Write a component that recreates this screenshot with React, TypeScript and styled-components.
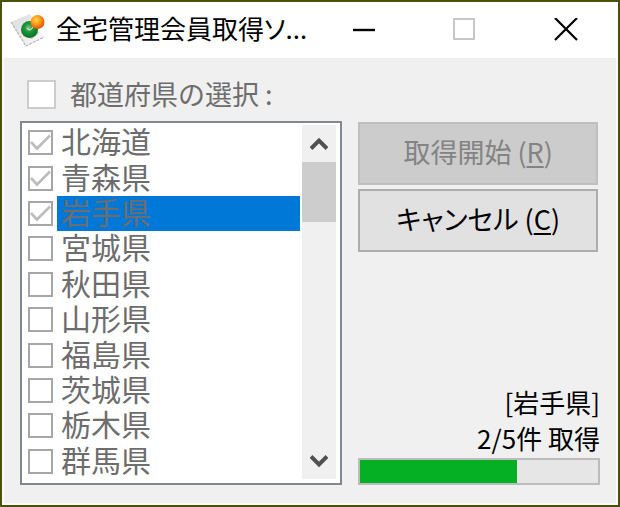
import React, { useState } from "react";
import styled, { createGlobalStyle } from "styled-components";

const GlobalStyle = createGlobalStyle`
  *, *::before, *::after { box-sizing: border-box; }
  body {
    margin: 0;
    font-family: "Noto Sans CJK JP", "Liberation Sans", sans-serif;
    font-size: 26px;
    line-height: 36px;
    color: #000;
  }
  button, input { font: inherit; margin: 0; padding: 0; }
`;

const Window = styled.div`
  display: flex;
  flex-direction: column;
  min-height: 100vh;
  border: 2px solid #4b5208;
  background: #f0f0f0;
  box-shadow: inset 0 0 0 2px #fafafa;
`;

const TitleBar = styled.header`
  display: flex;
  align-items: center;
  height: 56px;
  padding-left: 8px;
  background: #fff;
`;

const AppIcon = styled.svg`
  flex: none;
  width: 36px;
  height: 36px;
`;

const Title = styled.h1`
  flex: 1;
  margin: 0 0 4px 10px;
  font-size: 26px;
  font-weight: 400;
  white-space: nowrap;
  font-feature-settings: "palt";
`;

const WindowButtons = styled.div`
  display: flex;
  margin-right: 2px;
`;

const WindowButton = styled.button`
  display: grid;
  place-items: center;
  width: 101px;
  height: 54px;
  border: 0;
  background: transparent;
  color: #000;
  &:disabled { color: #c8c8c8; }
  svg { width: 24px; height: 24px; }
`;

const Content = styled.main`
  flex: 1;
  display: flex;
  flex-direction: column;
  padding: 18px 18px 20px;
`;

const SelectAll = styled.label`
  display: flex;
  align-items: center;
  gap: 14px;
  height: 36px;
  margin: 0 0 9px 7px;
  font-size: 27px;
  color: #6d6d6d;
`;

const Tick = styled.span`
  flex: none;
  display: grid;
  svg { grid-area: 1 / 1; width: 25px; height: 25px; }
`;

const TickInput = styled.input<{ $large?: boolean }>`
  grid-area: 1 / 1;
  appearance: none;
  width: ${(p) => (p.$large ? 29 : 25)}px;
  height: ${(p) => (p.$large ? 29 : 25)}px;
  border: 2px solid ${(p) => (p.$large ? "#cccccc" : "#a6a6a6")};
  background: #fff;
`;

const Columns = styled.div`
  flex: 1;
  display: grid;
  grid-template-columns: 4fr 3fr;
  gap: 16px;
`;

const ListBox = styled.div`
  display: flex;
  padding: 2px 4px 4px 6px;
  border: 2px solid #828790;
  background: #fff;
`;

const Items = styled.ul`
  flex: 1;
  display: grid;
  grid-auto-rows: 1fr;
  margin: 0;
  padding: 0;
  list-style: none;
`;

const Item = styled.li`
  display: flex;
`;

const ItemLabel = styled.label`
  flex: 1;
  display: flex;
  align-items: center;
  gap: 4px;
`;

const ItemText = styled.span<{ $selected: boolean }>`
  flex: 1;
  align-self: stretch;
  display: flex;
  align-items: center;
  padding: 0 0 5px 4px;
  font-size: 30px;
  line-height: 30px;
  white-space: nowrap;
  color: #6d6d6d;
  background: ${(p) => (p.$selected ? "#0078d7" : "transparent")};
`;

const ScrollBar = styled.div`
  display: flex;
  flex-direction: column;
  width: 34px;
  margin-left: 2px;
  background: #f0f0f0;
`;

const ScrollButton = styled.button`
  display: grid;
  place-items: center;
  height: 37px;
  border: 0;
  background: #f0f0f0;
  svg { width: 18px; height: 16px; }
`;

const ScrollTrack = styled.div`
  flex: 1;
`;

const ScrollThumb = styled.div`
  height: 60px;
  background: #cdcdcd;
`;

const Side = styled.div`
  display: flex;
  flex-direction: column;
  justify-content: space-between;
`;

const Actions = styled.div`
  display: grid;
  gap: 4px;
  padding: 1px 2px 0 0;
`;

const ActionButton = styled.button`
  height: 63px;
  padding-bottom: 4px;
  border: 2px solid #adadad;
  background: #e1e1e1;
  color: #000;
  font-size: 27px;
  font-feature-settings: "palt";
  &:disabled {
    border-color: #bfbfbf;
    background: #cccccc;
    color: #838383;
  }
  u { text-decoration-thickness: 2px; text-underline-offset: 3px; }
`;

const Status = styled.div`
  display: grid;
  text-align: right;
  p { margin: 0; }
`;

const Progress = styled.progress`
  appearance: none;
  display: block;
  width: 100%;
  height: 27px;
  margin-top: 2px;
  border: 2px solid #bcbcbc;
  background: #e6e6e6;
  &::-webkit-progress-bar { background: #e6e6e6; }
  &::-webkit-progress-value { background: #06b025; }
`;

const prefectures = [
  "北海道", "青森県", "岩手県", "宮城県", "秋田県",
  "山形県", "福島県", "茨城県", "栃木県", "群馬県",
];

function CheckMark() {
  return (
    <svg viewBox="0 0 25 25" fill="none" stroke="#bdbdbd" strokeWidth="2.6" pointerEvents="none">
      <path d="M3 12 L9 18.5 L22 5.5" />
    </svg>
  );
}

export default function App() {
  const [checked, setChecked] = useState(["北海道", "青森県", "岩手県"]);
  const selected = "岩手県";
  const toggle = (name: string) =>
    setChecked((c) => (c.includes(name) ? c.filter((n) => n !== name) : [...c, name]));

  return (
    <>
      <GlobalStyle />
      <Window>
        <TitleBar>
          <AppIcon viewBox="0 0 36 36" aria-hidden="true">
            <defs>
              <linearGradient id="paper" x1="0" y1="0" x2="1" y2="1">
                <stop offset="0" stopColor="#d9dadb" />
                <stop offset="1" stopColor="#fbfbfb" />
              </linearGradient>
              <radialGradient id="green" cx="0.45" cy="0.4" r="0.6">
                <stop offset="0" stopColor="#7bc68a" />
                <stop offset="0.4" stopColor="#21963c" />
                <stop offset="1" stopColor="#087024" />
              </radialGradient>
              <radialGradient id="orange" cx="0.4" cy="0.35" r="0.65">
                <stop offset="0" stopColor="#ffd34a" />
                <stop offset="0.5" stopColor="#fb9a18" />
                <stop offset="1" stopColor="#e2520a" />
              </radialGradient>
            </defs>
            <path d="M1 10 L20 2 L34 25 L16 34 Z" fill="url(#paper)" />
            <path d="M1 10 L16 34 L34 25" fill="none" stroke="#b5b5b5" strokeWidth="1.2" strokeDasharray="3 1" />
            <path d="M13 24 L22 27 L29 21 L24 14 Z" fill="#b4bcb5" opacity="0.7" />
            <circle cx="19.5" cy="17.5" r="8.5" fill="url(#green)" />
            <path d="M17 16 Q20 20 23 15" fill="none" stroke="#b7dfbf" strokeWidth="1.4" />
            <circle cx="27.5" cy="10" r="7" fill="url(#orange)" />
          </AppIcon>
          <Title>全宅管理会員取得ソ...</Title>
          <WindowButtons>
            <WindowButton aria-label="最小化">
              <svg viewBox="0 0 24 24" stroke="currentColor" strokeWidth="2.4"><path d="M1 12H23" /></svg>
            </WindowButton>
            <WindowButton aria-label="最大化" disabled>
              <svg viewBox="0 0 24 24" fill="none" stroke="currentColor" strokeWidth="2"><path d="M1 1H21V21H1Z" /></svg>
            </WindowButton>
            <WindowButton aria-label="閉じる">
              <svg viewBox="0 0 24 24" stroke="currentColor" strokeWidth="2.2"><path d="M1 0L23 22M23 0L1 22" /></svg>
            </WindowButton>
          </WindowButtons>
        </TitleBar>
        <Content>
          <SelectAll>
            <Tick><TickInput type="checkbox" $large disabled /></Tick>
            都道府県の選択 :
          </SelectAll>
          <Columns>
            <ListBox>
              <Items>
                {prefectures.map((name) => (
                  <Item key={name}>
                    <ItemLabel>
                      <Tick>
                        <TickInput
                          type="checkbox"
                          disabled
                          checked={checked.includes(name)}
                          onChange={() => toggle(name)}
                        />
                        {checked.includes(name) && <CheckMark />}
                      </Tick>
                      <ItemText $selected={name === selected}>{name}</ItemText>
                    </ItemLabel>
                  </Item>
                ))}
              </Items>
              <ScrollBar>
                <ScrollButton aria-label="上へ">
                  <svg viewBox="0 0 18 16" fill="none" stroke="#505050" strokeWidth="4"><path d="M1 12.5L9 4.5L17 12.5" /></svg>
                </ScrollButton>
                <ScrollTrack><ScrollThumb /></ScrollTrack>
                <ScrollButton aria-label="下へ">
                  <svg viewBox="0 0 18 16" fill="none" stroke="#505050" strokeWidth="4"><path d="M1 3.5L9 11.5L17 3.5" /></svg>
                </ScrollButton>
              </ScrollBar>
            </ListBox>
            <Side>
              <Actions>
                <ActionButton disabled>取得開始 (<u>R</u>)</ActionButton>
                <ActionButton>キャンセル (<u>C</u>)</ActionButton>
              </Actions>
              <Status>
                <p>[岩手県]</p>
                <p>2/5件 取得</p>
                <Progress aria-label="取得の進捗" max={100} value={66} />
              </Status>
            </Side>
          </Columns>
        </Content>
      </Window>
    </>
  );
}
